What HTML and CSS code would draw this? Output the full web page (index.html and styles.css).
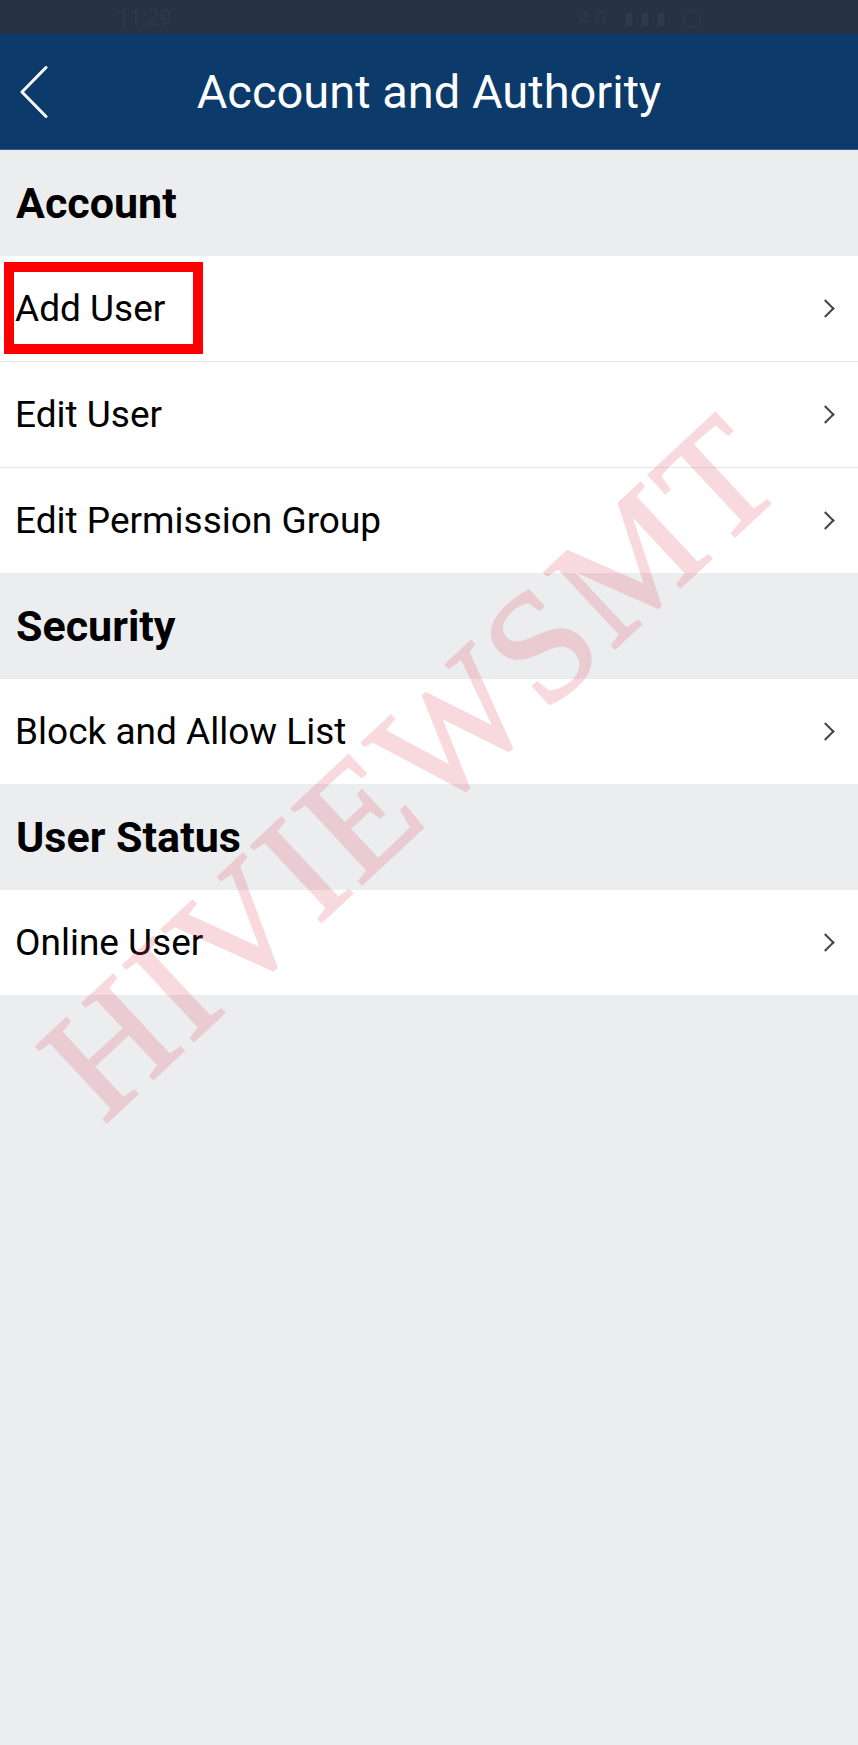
FILE: index.html
```html
<!DOCTYPE html>
<html lang="en">
<head>
<meta charset="utf-8">
<title>Account and Authority</title>
<link rel="stylesheet" href="styles.css">
</head>
<body>
<div class="screen">
  <div class="statusbar">
    <span class="time">11:29</span>
    <span class="status-icons">4G ▮▮▮ ◯</span>
  </div>
  <header class="appbar">
    <button class="back" aria-label="Back">
      <svg width="30" height="52" viewBox="0 0 30 52"><polyline points="27,1.5 3,26 27,50.5" fill="none" stroke="#fff" stroke-width="3" stroke-linecap="round" stroke-linejoin="round"/></svg>
    </button>
    <h1 class="title">Account and Authority</h1>
  </header>

  <main class="content">
    <section class="group">
      <h2 class="group-title">Account</h2>
      <ul class="list">
        <li class="row highlighted"><span class="label">Add User</span><span class="chev"></span><span class="mark"></span></li>
        <li class="row"><span class="label">Edit User</span><span class="chev"></span></li>
        <li class="row"><span class="label">Edit Permission Group</span><span class="chev"></span></li>
      </ul>
    </section>
    <section class="group">
      <h2 class="group-title">Security</h2>
      <ul class="list">
        <li class="row"><span class="label">Block and Allow List</span><span class="chev"></span></li>
      </ul>
    </section>
    <section class="group">
      <h2 class="group-title">User Status</h2>
      <ul class="list">
        <li class="row"><span class="label">Online User</span><span class="chev"></span></li>
      </ul>
    </section>
  </main>

  <div class="watermark">HIVIEWSMT</div>
</div>
</body>
</html>
```

FILE: styles.css
```css
* { box-sizing: border-box; }
html, body { margin: 0; padding: 0; }
body {
  background: #ecedef;
  font-family: Roboto, "Noto Sans", "Liberation Sans", sans-serif;
  color: #000;
}
.screen {
  position: relative;
  width: 858px;
  min-height: 1745px;
  background: #ecedef;
  overflow: hidden;
}
.statusbar {
  height: 34px;
  background: #283245;
  display: flex;
  align-items: center;
  justify-content: space-between;
  padding: 0 150px 0 117px;
  color: #2f394c;
  font-size: 22px;
}
.status-icons { font-size: 18px; letter-spacing: 6px; }
.appbar {
  height: 116px;
  background: #0b3a6b;
  border-bottom: 1px solid #2c5f92;
  display: flex;
  align-items: center;
  justify-content: center;
  position: relative;
}
.back {
  position: absolute;
  left: 19px;
  top: 50%;
  transform: translateY(-50%);
  background: none;
  border: 0;
  padding: 0;
  display: flex;
}
.title {
  margin: 0;
  color: #fff;
  font-weight: 400;
  font-size: 47px;
  letter-spacing: 0;
}
.group-title {
  margin: 0;
  height: 106px;
  display: flex;
  align-items: center;
  padding: 0 0 0 16px;
  font-size: 43px;
  font-weight: 700;
}
.list {
  list-style: none;
  margin: 0;
  padding: 0;
  background: #fff;
}
.row {
  position: relative;
  height: 106px;
  display: flex;
  align-items: center;
  justify-content: space-between;
  padding: 0 22px 0 15px;
  border-bottom: 1px solid #e6e7e9;
  font-size: 37px;
}
.row:last-child { border-bottom: 0; height: 105px; }
.chev {
  width: 13px;
  height: 13px;
  border-top: 2px solid #444;
  border-right: 2px solid #444;
  transform: rotate(45deg);
  margin-right: 4px;
}
.mark {
  position: absolute;
  left: 4px;
  top: 6px;
  width: 199px;
  height: 92px;
  border: 10px solid #ff0000;
}
.watermark {
  position: absolute;
  left: 411px;
  top: 766px;
  transform: translate(-50%, -50%) rotate(-43deg);
  font-family: "Liberation Serif", "DejaVu Serif", serif;
  font-size: 158px;
  line-height: 1;
  letter-spacing: 4px;
  color: #e0485e;
  -webkit-text-stroke: 2.5px #e0485e;
  opacity: 0.2;
  white-space: nowrap;
  pointer-events: none;
}
```
